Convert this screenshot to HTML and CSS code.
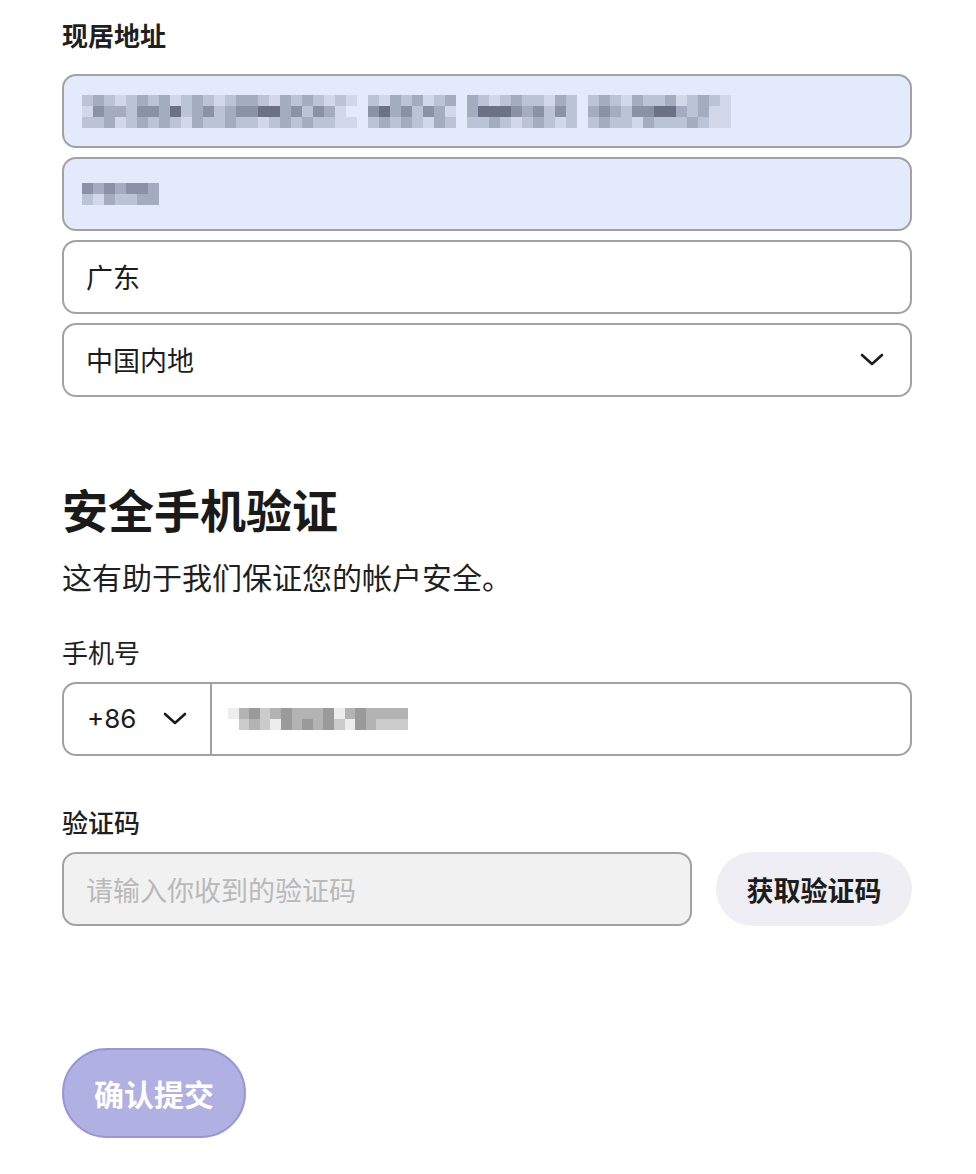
FILE: index.html
```html
<!DOCTYPE html>
<html lang="zh-CN">
<head>
<meta charset="utf-8">
<title>资料确认</title>
<link rel="stylesheet" href="styles.css">
</head>
<body>
<main class="page">
  <section class="address">
    <div class="label label-strong">现居地址</div>
    <div class="fields">
      <div class="field field-autofill">
        <div class="mosaic cols-59">
          <i class="s2"></i><i class="s3"></i><i class="s2"></i><i class="s1"></i><i class="s2"></i><i class="s3"></i><i class="s2"></i><i class="s3"></i><i class="s1"></i><i class="s2"></i>
          <i class="s3"></i><i class="s2"></i><i class="s1"></i><i class="s2"></i><i class="s3"></i><i class="s3"></i><i class="s2"></i><i class="s1"></i><i class="s3"></i><i class="s2"></i>
          <i class="s3"></i><i class="s2"></i><i class="s1"></i><i class="s2"></i><i class="s1"></i><i></i><i class="s2"></i><i class="s1"></i><i class="s3"></i><i class="s2"></i>
          <i class="s3"></i><i class="s1"></i><i class="s2"></i><i class="s3"></i><i></i><i class="s3"></i><i class="s2"></i><i class="s1"></i><i class="s2"></i><i class="s3"></i>
          <i class="s2"></i><i class="s2"></i><i class="s1"></i><i class="s3"></i><i class="s2"></i><i></i><i class="s2"></i><i class="s3"></i><i class="s2"></i><i class="s1"></i>
          <i class="s3"></i><i class="s2"></i><i class="s2"></i><i class="s3"></i><i class="s1"></i><i class="s2"></i><i class="s3"></i><i class="s2"></i><i class="s1"></i>

          <i class="s1"></i><i class="s4"></i><i class="s3"></i><i class="s3"></i><i class="s2"></i><i class="s4"></i><i class="s4"></i><i class="s3"></i><i class="s5"></i><i class="s2"></i>
          <i class="s3"></i><i class="s4"></i><i class="s2"></i><i class="s3"></i><i class="s4"></i><i class="s4"></i><i class="s5"></i><i class="s5"></i><i class="s3"></i><i class="s4"></i>
          <i class="s2"></i><i class="s4"></i><i class="s3"></i><i class="s1"></i><i></i><i></i><i class="s4"></i><i class="s5"></i><i class="s3"></i><i class="s4"></i>
          <i class="s2"></i><i class="s4"></i><i class="s3"></i><i class="s1"></i><i></i><i class="s3"></i><i class="s5"></i><i class="s5"></i><i class="s5"></i><i class="s4"></i>
          <i class="s3"></i><i class="s4"></i><i class="s2"></i><i class="s4"></i><i class="s2"></i><i></i><i class="s3"></i><i class="s4"></i><i class="s3"></i><i class="s2"></i>
          <i class="s4"></i><i class="s4"></i><i class="s5"></i><i class="s5"></i><i class="s3"></i><i class="s2"></i><i class="s3"></i><i class="s1"></i><i class="s1"></i>

          <i class="s2"></i><i class="s2"></i><i class="s3"></i><i class="s1"></i><i class="s2"></i><i class="s3"></i><i class="s2"></i><i class="s3"></i><i class="s2"></i><i class="s1"></i>
          <i class="s3"></i><i class="s2"></i><i class="s2"></i><i class="s3"></i><i class="s2"></i><i class="s2"></i><i class="s1"></i><i class="s2"></i><i class="s3"></i><i class="s2"></i>
          <i class="s3"></i><i class="s2"></i><i class="s2"></i><i class="s1"></i><i class="s1"></i><i></i><i class="s2"></i><i class="s3"></i><i class="s2"></i><i class="s3"></i>
          <i class="s2"></i><i class="s1"></i><i class="s3"></i><i class="s2"></i><i></i><i class="s2"></i><i class="s2"></i><i class="s3"></i><i class="s2"></i><i class="s1"></i>
          <i class="s2"></i><i class="s3"></i><i class="s2"></i><i class="s1"></i><i class="s2"></i><i></i><i class="s2"></i><i class="s3"></i><i class="s2"></i><i class="s2"></i>
          <i class="s1"></i><i class="s3"></i><i class="s2"></i><i class="s2"></i><i class="s2"></i><i class="s3"></i><i class="s2"></i><i class="s1"></i><i class="s1"></i>
        </div>
      </div>
      <div class="field field-autofill">
        <div class="mosaic cols-7">
          <i class="s4"></i><i class="s3"></i><i class="s4"></i><i class="s3"></i><i class="s4"></i><i class="s4"></i><i class="s3"></i>
          <i class="s2"></i><i class="s1"></i><i class="s3"></i><i class="s2"></i><i class="s2"></i><i class="s3"></i><i class="s3"></i>
        </div>
      </div>
      <div class="field">
        <span class="value">广东</span>
      </div>
      <div class="field field-select">
        <span class="value">中国内地</span>
        <svg class="chevron" width="24" height="14" viewBox="0 0 24 14" aria-hidden="true">
          <path d="M2 2 L12 11 L22 2" fill="none" stroke="#1c1c1c" stroke-width="2.6" stroke-linecap="round" stroke-linejoin="round"/>
        </svg>
      </div>
    </div>
  </section>

  <section class="security">
    <h2 class="title">安全手机验证</h2>
    <p class="lead">这有助于我们保证您的帐户安全。</p>

    <div class="label label-phone">手机号</div>
    <div class="field field-phone">
      <div class="dial">
        <span class="dial-code">+86</span>
        <svg class="chevron" width="24" height="14" viewBox="0 0 24 14" aria-hidden="true">
          <path d="M2 2 L12 11 L22 2" fill="none" stroke="#1c1c1c" stroke-width="2.6" stroke-linecap="round" stroke-linejoin="round"/>
        </svg>
      </div>
      <div class="phone-number">
        <div class="mosaic cols-17 mono">
          <i class="s1"></i><i class="s3"></i><i class="s4"></i><i class="s2"></i><i class="s3"></i><i class="s4"></i><i class="s3"></i><i class="s3"></i><i class="s3"></i><i class="s4"></i><i class="s1"></i><i class="s3"></i><i class="s4"></i><i class="s3"></i><i class="s3"></i><i class="s3"></i><i class="s3"></i>
          <i></i><i class="s2"></i><i class="s3"></i><i class="s2"></i><i class="s1"></i><i class="s4"></i><i class="s3"></i><i class="s4"></i><i class="s3"></i><i class="s4"></i><i class="s2"></i><i class="s1"></i><i class="s4"></i><i class="s3"></i><i class="s2"></i><i class="s2"></i><i class="s2"></i>
        </div>
      </div>
    </div>

    <div class="label label-medium label-code">验证码</div>
    <div class="code-row">
      <input class="field field-code" type="text" placeholder="请输入你收到的验证码">
      <button class="btn-send" type="button">获取验证码</button>
    </div>

    <button class="btn-submit" type="button">确认提交</button>
  </section>
</main>
</body>
</html>
```

FILE: styles.css
```css
* {
  box-sizing: border-box;
}

html,
body {
  margin: 0;
  padding: 0;
  background: #ffffff;
}

body {
  font-family: "Noto Sans CJK SC", "Noto Sans", sans-serif;
  color: #1c1c1c;
}

.page {
  width: 850px;
  margin-left: 62px;
  padding-top: 17px;
  padding-bottom: 40px;
}

/* labels */
.label {
  font-size: 26px;
  line-height: 36px;
  font-weight: 400;
  color: #1f1f1f;
}

.label-strong {
  font-weight: 600;
}

.label-medium {
  font-weight: 500;
}

.address .label {
  margin-bottom: 21px;
}

/* text fields */
.fields {
  display: flex;
  flex-direction: column;
  gap: 9px;
}

.field {
  display: flex;
  align-items: center;
  height: 74px;
  padding: 0 24px 0 22px;
  border: 2px solid #a2a2a2;
  border-radius: 14px;
  background: #ffffff;
  font-family: "Noto Sans CJK SC", "Noto Sans", sans-serif;
  font-size: 27px;
  color: #1c1c1c;
}

.field-autofill {
  background: #e2eafc;
  padding-left: 18px;
}

.field-select {
  justify-content: space-between;
  padding-right: 26px;
}

.value {
  line-height: 36px;
}

.chevron {
  display: block;
  flex: none;
}

/* pixelated redacted values */
.mosaic {
  --ink: 50 58 80;
  display: grid;
  grid-auto-rows: 11px;
  grid-auto-flow: row;
}

.mosaic.mono {
  --ink: 20 20 20;
}

.cols-59 { grid-template-columns: repeat(59, 11px); }
.cols-7 { grid-template-columns: repeat(7, 11px); }
.cols-17 { grid-template-columns: repeat(17, 10.6px); }

.mosaic i { display: block; }
.mosaic .s1 { background: rgb(var(--ink) / 0.1); }
.mosaic .s2 { background: rgb(var(--ink) / 0.22); }
.mosaic .s3 { background: rgb(var(--ink) / 0.35); }
.mosaic .s4 { background: rgb(var(--ink) / 0.5); }
.mosaic .s5 { background: rgb(var(--ink) / 0.68); }

.mosaic.mono .s1 { background: rgb(var(--ink) / 0.08); }
.mosaic.mono .s2 { background: rgb(var(--ink) / 0.22); }
.mosaic.mono .s3 { background: rgb(var(--ink) / 0.32); }
.mosaic.mono .s4 { background: rgb(var(--ink) / 0.43); }

/* security section */
.title {
  margin: 81px 0 0;
  font-size: 46px;
  line-height: 60px;
  font-weight: 700;
  color: #1a1a1a;
}

.lead {
  margin: 18px 0 0;
  font-size: 30px;
  line-height: 40px;
  color: #1f1f1f;
}

.label-phone {
  margin-top: 38px;
  margin-bottom: 12px;
}

.field-phone {
  padding: 0;
}

.dial {
  display: flex;
  align-items: center;
  gap: 27px;
  width: 148px;
  height: 100%;
  padding-left: 23px;
  border-right: 2px solid #a2a2a2;
}

.dial-code {
  font-family: "Inter", "Noto Sans", sans-serif;
  font-size: 26px;
  line-height: 36px;
  color: #1c1c1c;
}

.phone-number {
  display: flex;
  align-items: center;
  padding-left: 16px;
}

.label-code {
  margin-top: 48px;
  margin-bottom: 12px;
}

.code-row {
  display: flex;
  gap: 24px;
}

.field-code {
  flex: 1;
  min-width: 0;
  background: #f1f1f1;
  outline: none;
}

.field-code::placeholder {
  color: #b9b9b9;
}

.btn-send {
  flex: none;
  width: 196px;
  height: 74px;
  border: none;
  border-radius: 37px;
  background: #eeeef4;
  font-family: "Noto Sans CJK SC", "Noto Sans", sans-serif;
  font-size: 27px;
  font-weight: 700;
  color: #1c1c1c;
  padding: 0;
}

.btn-submit {
  display: block;
  margin-top: 122px;
  width: 184px;
  height: 90px;
  padding: 0;
  border: 2px solid #9896da;
  border-radius: 45px;
  background: #b1b0e2;
  font-family: "Noto Sans CJK SC", "Noto Sans", sans-serif;
  font-size: 30px;
  font-weight: 700;
  color: #ffffff;
}
```
